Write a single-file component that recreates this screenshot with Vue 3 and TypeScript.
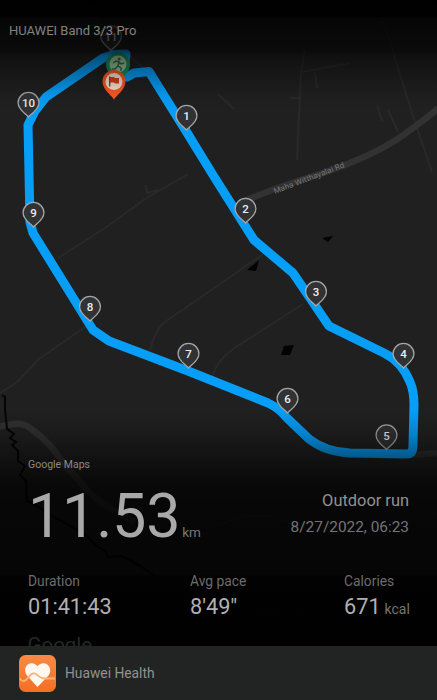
<script setup lang="ts">
interface Pin {
  label: string
  x: number
  y: number
}

const pins: Pin[] = [
  { label: '11', x: 111, y: 36.5 },
  { label: '10', x: 28.5, y: 103 },
  { label: '9', x: 33.5, y: 213 },
  { label: '8', x: 90, y: 307 },
  { label: '7', x: 188.5, y: 354 },
  { label: '6', x: 287.5, y: 399 },
  { label: '5', x: 386.5, y: 435.5 },
  { label: '4', x: 403.5, y: 354 },
  { label: '3', x: 316, y: 292 },
  { label: '2', x: 245.5, y: 209 },
  { label: '1', x: 186.5, y: 116 },
]

const stats = [
  { name: 'Duration', value: '01:41:43', unit: '' },
  { name: 'Avg pace', value: '8\'49"', unit: '' },
  { name: 'Calories', value: '671', unit: 'kcal' },
]

const pinPath = 'M0 14 C-3 10.5 -10.4 7 -10.4 -.2 A10.4 10.4 0 0 1 10.4 -.2 C10.4 7 3 10.5 0 14Z'
</script>

<template>
  <main class="screen">
    <svg class="map" viewBox="0 0 437 700" aria-hidden="true">
      <defs>
        <linearGradient id="shade" x1="0" y1="0" x2="0" y2="1">
          <stop offset="0" stop-color="#000" stop-opacity="1" />
          <stop offset=".024" stop-color="#000" stop-opacity=".96" />
          <stop offset=".026" stop-color="#000" stop-opacity=".82" />
          <stop offset=".072" stop-color="#000" stop-opacity=".68" />
          <stop offset=".08" stop-color="#000" stop-opacity=".5" />
          <stop offset=".137" stop-color="#000" stop-opacity=".06" />
          <stop offset=".16" stop-color="#000" stop-opacity="0" />
          <stop offset=".585" stop-color="#000" stop-opacity="0" />
          <stop offset=".62" stop-color="#000" stop-opacity=".18" />
          <stop offset=".65" stop-color="#000" stop-opacity=".42" />
          <stop offset=".69" stop-color="#000" stop-opacity=".72" />
          <stop offset=".72" stop-color="#000" stop-opacity=".79" />
          <stop offset=".82" stop-color="#000" stop-opacity=".82" />
          <stop offset=".824" stop-color="#000" stop-opacity=".95" />
          <stop offset=".92" stop-color="#000" stop-opacity=".97" />
          <stop offset="1" stop-color="#000" stop-opacity="1" />
        </linearGradient>
      </defs>
      <rect width="437" height="700" fill="#202020" />
      <g class="lane">
        <path d="M305 50 L301 72 L297 160 M302 72 L350 63 M315 72 L317 88 M290 98 H301" />
        <path d="M378 8 L391 44 L397 65 L415 122 L432 172 M388 110 L398 132 M377 105 L382 121 M218 94 L234 109" />
        <path d="M84 0 L105 32 L145 70 L151 76" />
        <path d="M58 258 L108 226 L145 199 L188 174 M146 185 L147 193 L158 190" />
        <path d="M150 350 C157 326 160 324 184 309 L262 255" />
        <path d="M212 377 C218 360 226 354 239 345 L303 304" />
        <path d="M0 393 L16 383 L39 359 L62 343 L88 325" />
        <path d="M217 525 L247 516 L272 516 L310 530 L372 533 L437 512 M238 586 L290 577 M234 613 L304 611 L352 620" />
      </g>
      <path class="road" d="M242 202 C263 193 290 183 320 174 C359 161 389 147 410 130 C421 122 430 116 438 108" />
      <path class="road" d="M-2 427 C16 423 22 421 34 431 C56 447 61 464 76 477 C93 500 110 509 135 522" />
      <path class="road dim" d="M412 455 L437 453" />
      <path class="water" d="M2 395 L5 397 L5 409 L7 429 L14 434 L10 438 L16 442 L12 445 L18 451 L18 461 L25 466 L20 475 L26 481 L27 501 L37 506 L52 516 L71 526 L88 537 L95 545 L106 552 L108 557 L122 556 L139 565 L155 576" />
      <path class="lake" d="M259 260 L256 271 L247 270Z M322 238 L333 236 L328 242Z M284 346 L294 345 L290 355 L281 355Z" />
      <text class="street" transform="translate(275 194) rotate(-21)" textLength="75">Maha Witthayalai Rd</text>
      <path
        class="route"
        d="M119 74 L127 77 L134 73 L149 71.5 L186 131 L213 175 L254 240 L293 273 L329 326 L384 353 Q402 362 410 382 Q414 391 414 405 L413 445 Q413 454 407 454 L350 453 Q326 452 309 439 L287 418 Q279 408 268 403 L188 371 L109 341 L93 330 L33 233 L30 222 L28 125 L35 111 L46 97 L103 58 L113 54.5 L126 54 L125 63"
      />
      <g v-for="pin in pins" :key="pin.label" :transform="`translate(${pin.x} ${pin.y})`">
        <path class="pin" :d="pinPath" />
        <text class="pin-label" y="4.2">{{ pin.label }}</text>
      </g>
      <g transform="translate(118 65)">
        <path d="M0 19 C-3 13 -12 8 -12 -1 A12 12 0 0 1 12 -1 C12 8 3 13 0 19Z" fill="#159760" />
        <circle r="8.5" cy="-1" fill="#a9c9a2" />
        <circle cx="1.2" cy="-6" r="1.6" fill="#23744b" />
        <path d="M-5 -2 L-2 -4 L1 -3 L0 1 L3 3 L3 6 M0 1 L-3 4 L-6 4 M1 -3 L3 -1 L6 -2" fill="none" stroke="#23744b" stroke-width="1.5" />
      </g>
      <g transform="translate(114 82.5)">
        <path d="M0 17 C-3 12 -11.5 7 -11.5 -1 A11.5 11.5 0 0 1 11.5 -1 C11.5 7 3 12 0 17Z" fill="#ff5a26" />
        <circle r="8.5" cy="-1" fill="#ffe9d2" />
        <path d="M-4.3 -6 V4" stroke="#8e3426" stroke-width="1.3" />
        <path d="M-4 -5.5 H0 L1 -4.5 H5 V1 H1 L0 0 H-4Z" fill="#e2401f" />
      </g>
      <rect width="437" height="700" fill="url(#shade)" />
      <text class="watermark" x="27.5" y="651.5">Google</text>
    </svg>

    <header class="device">HUAWEI Band 3/3 Pro</header>

    <section class="summary">
      <div class="source">Google Maps</div>
      <div class="headline">
        <div class="distance"><span class="amount">11.53</span><span class="km">km</span></div>
        <div class="activity">
          <div class="kind">Outdoor run</div>
          <time class="date">8/27/2022, 06:23</time>
        </div>
      </div>
      <div class="stats">
        <div v-for="stat in stats" :key="stat.name" class="stat">
          <div class="name">{{ stat.name }}</div>
          <div class="value">{{ stat.value }}<span v-if="stat.unit" class="unit">{{ stat.unit }}</span></div>
        </div>
      </div>
    </section>

    <footer class="brand">
      <svg class="logo" viewBox="0 0 37 37" aria-hidden="true">
        <defs>
          <linearGradient id="orange" x1="0" y1="0" x2="0" y2="1">
            <stop offset="0" stop-color="#f88a45" />
            <stop offset="1" stop-color="#f46f24" />
          </linearGradient>
        </defs>
        <rect width="37" height="37" rx="6.5" fill="url(#orange)" />
        <path d="M18.5 32 L8 20.5 C4.5 16 6 9 12 8.3 C15 8 17 9.5 18.5 11.3 C20 9.5 22 8 25 8.3 C31 9 33 16 29.5 20.5Z" fill="#fff8ee" />
        <path d="M1 23.5 C3 27 5 27 8 24 C11 20 13 17.5 16 18.5 C19 20 21 23.5 25 23.5 H36" fill="none" stroke="#fbb27a" stroke-width="1.8" />
      </svg>
      <span>Huawei Health</span>
    </footer>
  </main>
</template>

<style>
body {
  margin: 0;
  background: #000;
}
</style>

<style scoped>
.screen {
  position: relative;
  display: flex;
  flex-direction: column;
  width: 437px;
  height: 700px;
  overflow: hidden;
  font-family: Roboto, "Liberation Sans", sans-serif;
  color: #a9a9a9;
}
.map {
  position: absolute;
  inset: 0;
  width: 437px;
  height: 700px;
}
.lane {
  fill: none;
  stroke: #292929;
  stroke-width: 2;
}
.road {
  fill: none;
  stroke: #323232;
  stroke-width: 6.5;
}
.road.dim {
  stroke: #2e2e2e;
}
.water {
  fill: none;
  stroke: #050505;
  stroke-width: 2;
}
.lake {
  fill: #030303;
}
.street {
  font-size: 8px;
  fill: #777;
}
.route {
  fill: none;
  stroke: #079ef8;
  stroke-width: 9;
  stroke-linejoin: round;
}
.pin {
  fill: #303234;
  stroke: #a6a6a6;
  stroke-width: 1.3;
}
.pin-label {
  font-size: 11.5px;
  font-weight: 500;
  text-anchor: middle;
  fill: #eee;
}
.watermark {
  font-size: 20.5px;
  fill: #272727;
}
.device {
  position: relative;
  padding: 22px 9px 0;
  font-size: 13px;
  line-height: 17px;
  color: #828282;
}
.summary {
  position: relative;
  margin-top: auto;
  padding: 0 28px 23px;
}
.source {
  font-size: 10.5px;
  line-height: 14px;
  color: #8a8a8a;
}
.headline {
  display: flex;
  justify-content: space-between;
  height: 100px;
}
.distance {
  display: flex;
  align-items: baseline;
  padding-top: 9px;
  line-height: 70px;
}
.amount {
  font-size: 61px;
  letter-spacing: -0.2px;
}
.km {
  margin-left: 2px;
  font-size: 13.5px;
  color: #777;
}
.activity {
  padding-top: 18px;
  text-align: right;
}
.kind {
  font-size: 16.4px;
  line-height: 22px;
  color: #929292;
}
.date {
  display: block;
  margin-top: 5px;
  font-size: 15.4px;
  line-height: 20px;
  color: #747474;
}
.stats {
  display: grid;
  grid-template-columns: 162px 154px 1fr;
}
.name {
  font-size: 13.8px;
  line-height: 18px;
  color: #6c6c6c;
}
.value {
  margin-top: 3px;
  font-size: 21.7px;
  line-height: 28px;
  white-space: nowrap;
  color: #b0b0b0;
}
.unit {
  margin-left: 4px;
  font-size: 14px;
  color: #747474;
}
.brand {
  position: relative;
  display: flex;
  align-items: center;
  gap: 9px;
  box-sizing: border-box;
  height: 54px;
  padding: 0 19px;
  background: #222323;
  font-size: 13.8px;
  color: #929292;
}
.logo {
  width: 37px;
  height: 37px;
}
</style>
